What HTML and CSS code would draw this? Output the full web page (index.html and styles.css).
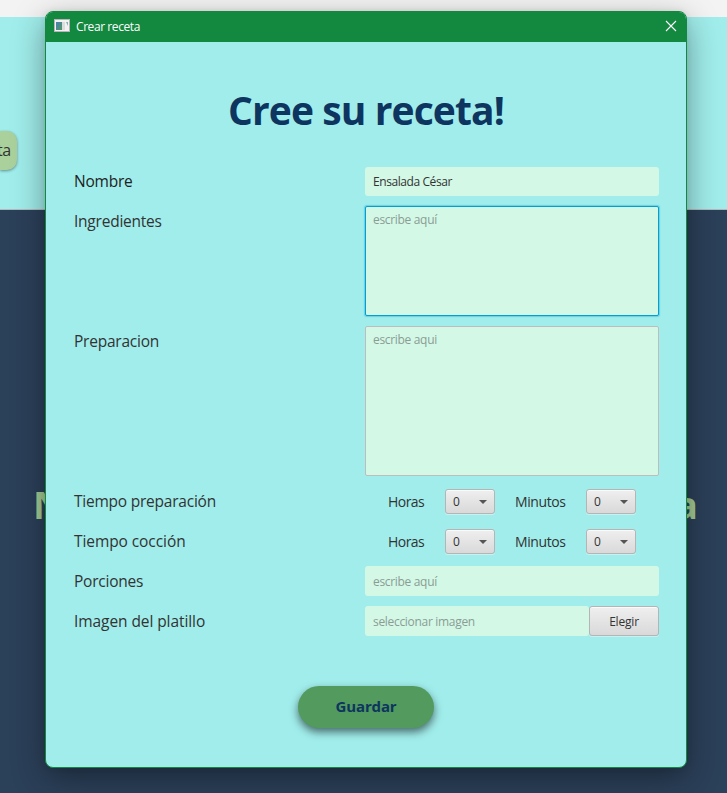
FILE: index.html
```html
<!DOCTYPE html>
<html lang="es">
<head>
<meta charset="utf-8">
<title>Crear receta</title>
<link rel="stylesheet" href="styles.css">
</head>
<body>
<div class="page">
  <div class="page-bar"></div>
  <div class="page-header"><span class="page-chip">ta</span></div>
  <div class="page-body"><span class="word-start">N</span><span class="word-end">a</span></div>
</div>
<main class="dialog">
  <header class="titlebar">
    <svg class="app-icon" width="16" height="14" viewBox="0 0 16 14">
      <defs><linearGradient id="pane" x2="1" y2="1"><stop stop-color="#4a7fb5"/><stop offset="1" stop-color="#4f9a62"/></linearGradient></defs>
      <rect x=".5" y=".5" width="15" height="12" fill="#f3f1f4" stroke="#b9b5bd"/>
      <rect x="2" y="3" width="6" height="8" fill="url(#pane)"/>
      <rect x="8" y="3" width="3" height="8" fill="#dcdcdc"/>
      <path d="M12 3h2v4z" fill="#7fb5a8"/>
    </svg>
    <span class="title">Crear receta</span>
    <svg class="close" width="12" height="12" viewBox="0 0 12 12"><path d="M1 1l10 10M11 1L1 11" stroke="#fff" stroke-width="1.1"/></svg>
  </header>
  <h1>Cree su receta!</h1>
  <form class="form">
    <label class="l-nombre">Nombre</label>
    <div class="field name">Ensalada César</div>
    <label class="l-ingr">Ingredientes</label>
    <div class="area focused">escribe aquí</div>
    <label class="l-prep">Preparacion</label>
    <div class="area steps">escribe aqui</div>
    <label class="l-tprep">Tiempo preparación</label>
    <div class="time">
      <span class="hours">Horas</span>
      <div class="combo"><span>0</span><i></i></div>
      <span class="minutes">Minutos</span>
      <div class="combo"><span>0</span><i></i></div>
    </div>
    <label class="l-tcoc">Tiempo cocción</label>
    <div class="time">
      <span class="hours">Horas</span>
      <div class="combo"><span>0</span><i></i></div>
      <span class="minutes">Minutos</span>
      <div class="combo"><span>0</span><i></i></div>
    </div>
    <label class="l-porc">Porciones</label>
    <div class="field hint">escribe aquí</div>
    <label class="l-img">Imagen del platillo</label>
    <div class="picker"><div class="field hint file">seleccionar imagen</div><div class="choose">Elegir</div></div>
  </form>
  <div class="save">Guardar</div>
</main>
</body>
</html>
```
FILE: styles.css
```css
* { box-sizing: border-box; }
body {
  margin: 0;
  width: 727px;
  height: 793px;
  position: relative;
  overflow: hidden;
  font-family: "Open Sans", "Noto Sans", sans-serif;
  font-size: 15px;
  color: #333;
}
.page { height: 793px; display: flex; flex-direction: column; background: #2b4059; }
.page-bar { height: 17px; background: #f3f3f3; }
.page-header { height: 193px; background: #a0edeb; border-bottom: 1px solid #b5b9bd; padding-top: 114px; }
.page-chip {
  display: block;
  width: 17px;
  height: 39px;
  line-height: 38px;
  border-radius: 0 10px 10px 0;
  background: #aad09c;
  box-shadow: 0 1px 3px rgba(0, 0, 0, .4);
  text-indent: -3px;
  font-size: 16px;
  letter-spacing: -.4px;
  white-space: nowrap;
}
.page-body {
  flex: 1;
  display: flex;
  justify-content: space-between;
  padding: 269px 29px 0 33px;
  font-size: 38px;
  line-height: 50px;
  font-weight: 700;
  color: #a4ca92;
}
.dialog {
  position: absolute;
  left: 45px;
  top: 11px;
  width: 642px;
  height: 757px;
  border: 1px solid #12893f;
  border-radius: 8px;
  background: #a0edeb;
  box-shadow: 0 10px 32px rgba(0, 0, 0, .38), 0 0 6px rgba(0, 0, 0, .08);
  overflow: hidden;
}
.titlebar {
  height: 30px;
  display: flex;
  align-items: center;
  padding: 0 9px 0 8px;
  background: #12893f;
  color: #fff;
  font-size: 12px;
}
.app-icon { margin-right: 6px; margin-top: -2px; }
.title { flex: 1; letter-spacing: -.42px; line-height: 30px; }
.close { margin-top: -2px; }
h1 {
  margin: 41px 0 0;
  height: 54px;
  line-height: 54px;
  font-size: 39px;
  font-weight: 700;
  letter-spacing: -.9px;
  text-align: center;
  color: #0d355f;
}
.form {
  display: grid;
  grid-template-columns: 291px 294px;
  grid-template-rows: 30px 110px 150px repeat(4, 30px);
  row-gap: 10px;
  margin: 29px 0 0 28px;
}
label { line-height: 30px; white-space: nowrap; font-size: 15.5px; letter-spacing: -.23px; }
.l-nombre { color: #222; }
.l-img { letter-spacing: -.08px; }
.l-tcoc { letter-spacing: -.08px; }
.field {
  height: 30px;
  line-height: 32px;
  padding-left: 8px;
  border-radius: 3px;
  background: #d3f8e6;
  font-size: 12px;
}
.name { height: 29px; line-height: 30px; margin-top: 1px; letter-spacing: -.42px; }
.hint, .area { color: #8b9c95; letter-spacing: -.32px; }
.area {
  border: 1px solid #bdbdbd;
  border-radius: 2px;
  background: #d3f8e6;
  padding: 4px 7px;
  line-height: 18px;
  font-size: 12px;
}
.focused { border-color: #039ed3; box-shadow: 0 0 1px 1px rgba(3, 158, 211, .35); }
.time { display: flex; align-items: center; padding-left: 23px; font-size: 14px; }
.hours { width: 57px; letter-spacing: -.55px; }
.minutes { width: 71px; letter-spacing: -.4px; }
.combo {
  width: 50px;
  height: 25px;
  margin-top: 1px;
  display: flex;
  align-items: center;
  justify-content: space-between;
  padding: 0 7px;
  border: 1px solid #b5b5b5;
  border-radius: 3px;
  background: linear-gradient(#efefef, #d9d9d9);
  box-shadow: inset 0 1px #fafafa, 0 1px #c8f2f1;
  font-size: 12px;
}
.combo + .minutes { margin-left: 20px; }
.combo i { border: 4px solid transparent; border-top-color: #555; border-bottom: 0; }
.picker { display: flex; }
.file { width: 224px; letter-spacing: -.31px; }
.choose {
  width: 70px;
  height: 30px;
  line-height: 30px;
  text-align: center;
  font-size: 12px;
  letter-spacing: -.2px;
  border: 1px solid #b5b5b5;
  border-radius: 3px;
  background: linear-gradient(#efefef, #d9d9d9);
  box-shadow: inset 0 1px #fafafa, 0 1px #c8f2f1;
}
.save {
  width: 136px;
  height: 42px;
  margin: 50px 0 0 252px;
  border-radius: 21px;
  background: #529a5d;
  box-shadow: 0 4px 8px rgba(0, 0, 0, .55);
  line-height: 41px;
  text-align: center;
  font-weight: 700;
  letter-spacing: -.15px;
  color: #0d355f;
}
```
